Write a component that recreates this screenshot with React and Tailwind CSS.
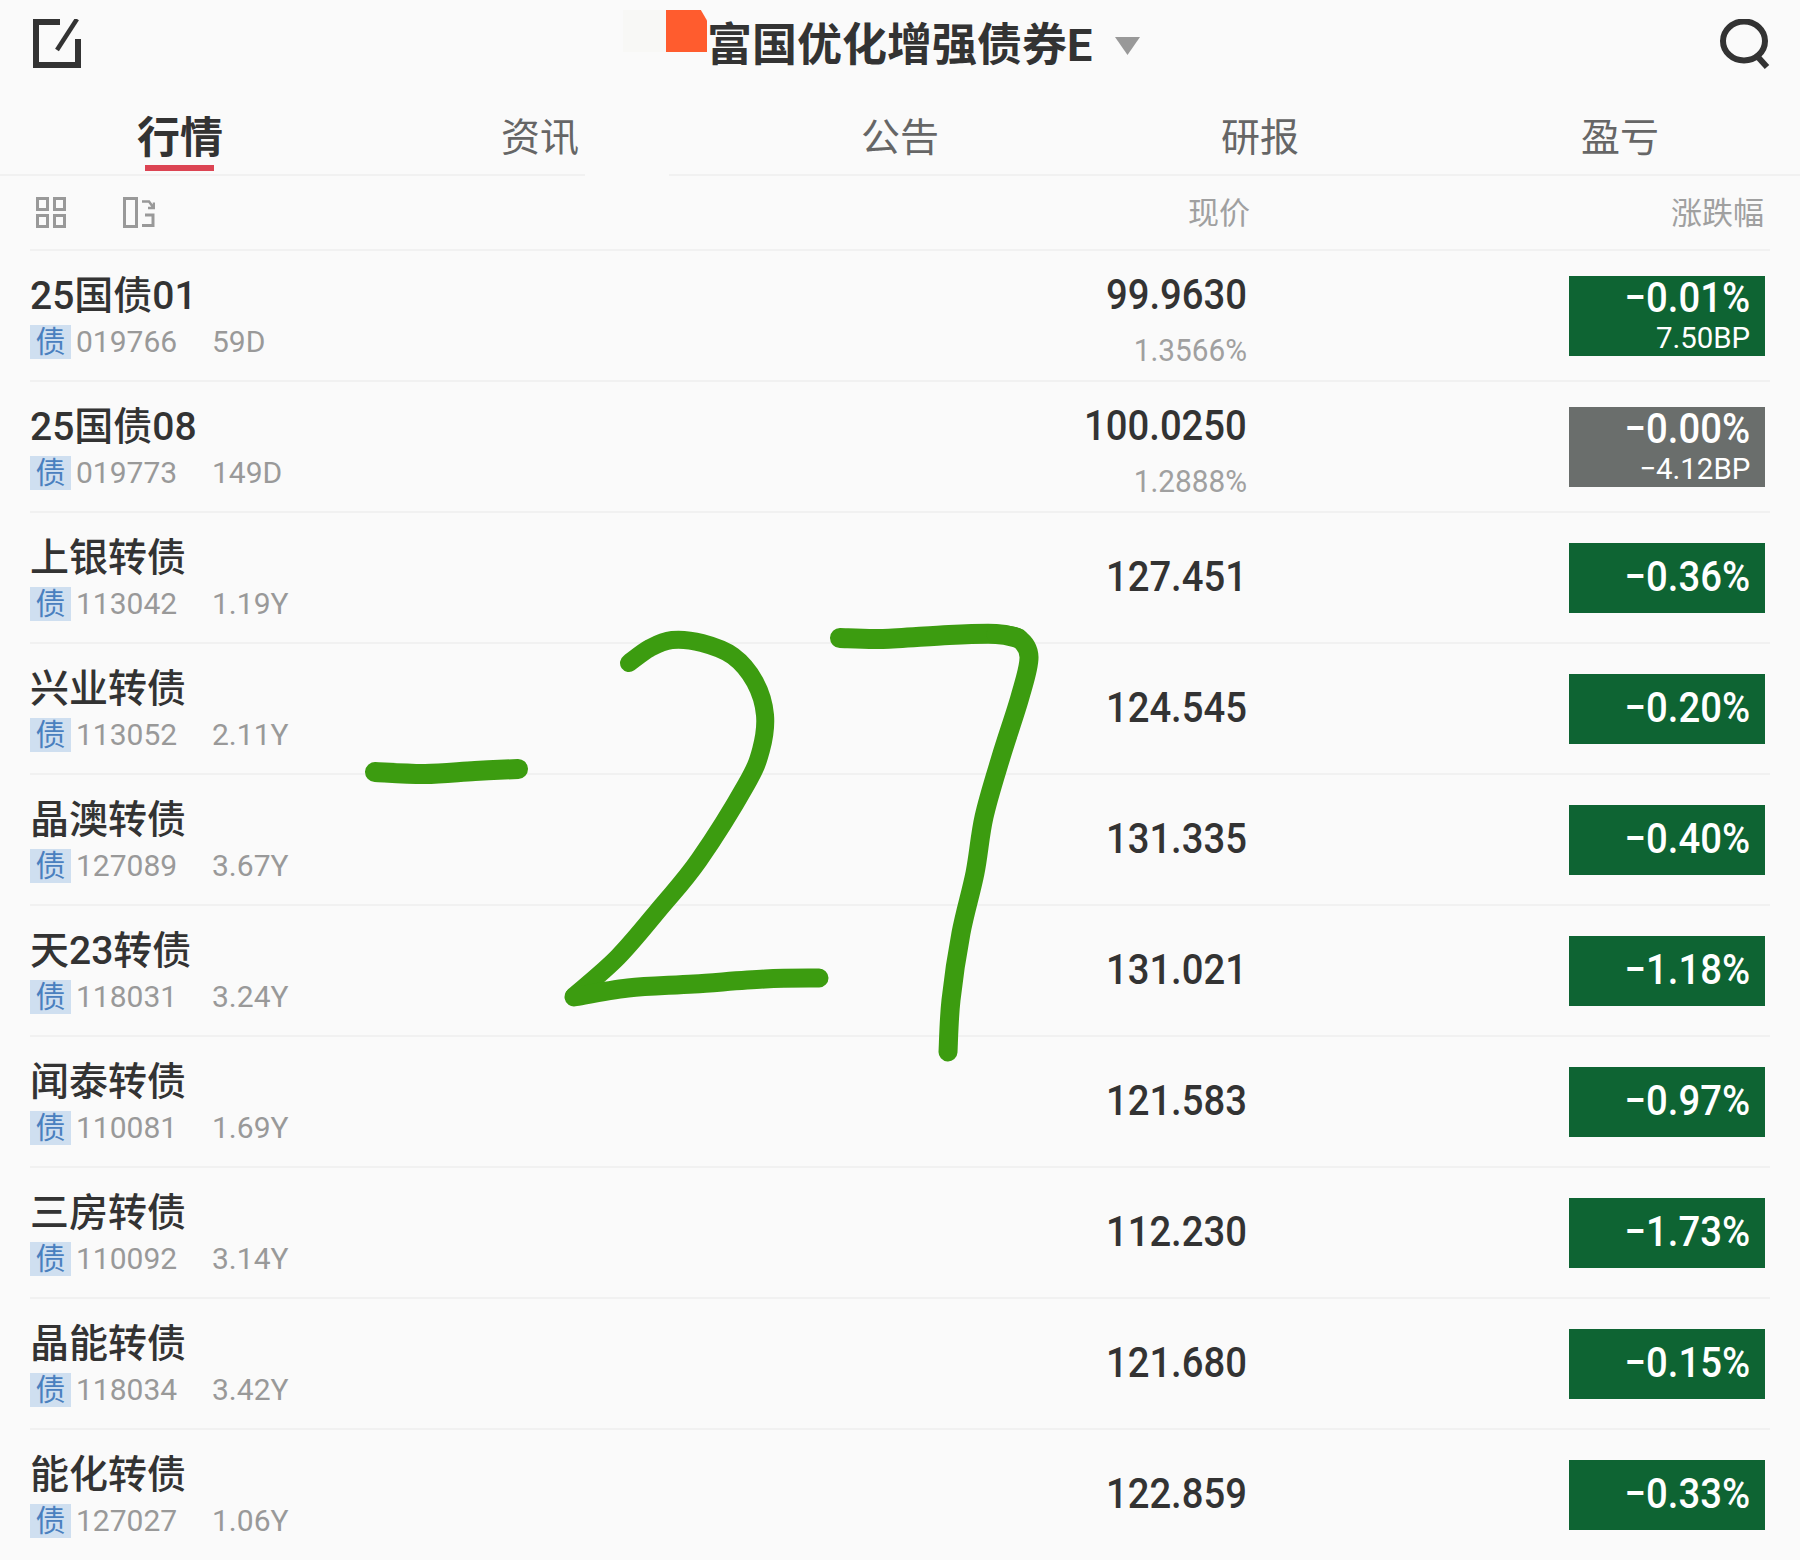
const rows = [
  { name: '25国债01', code: '019766', term: '59D', price: '99.9630', sub: '1.3566%', pct: '−0.01%', bp: '7.50BP' },
  { name: '25国债08', code: '019773', term: '149D', price: '100.0250', sub: '1.2888%', pct: '−0.00%', bp: '−4.12BP', flat: true },
  { name: '上银转债', code: '113042', term: '1.19Y', price: '127.451', pct: '−0.36%' },
  { name: '兴业转债', code: '113052', term: '2.11Y', price: '124.545', pct: '−0.20%' },
  { name: '晶澳转债', code: '127089', term: '3.67Y', price: '131.335', pct: '−0.40%' },
  { name: '天23转债', code: '118031', term: '3.24Y', price: '131.021', pct: '−1.18%' },
  { name: '闻泰转债', code: '110081', term: '1.69Y', price: '121.583', pct: '−0.97%' },
  { name: '三房转债', code: '110092', term: '3.14Y', price: '112.230', pct: '−1.73%' },
  { name: '晶能转债', code: '118034', term: '3.42Y', price: '121.680', pct: '−0.15%' },
  { name: '能化转债', code: '127027', term: '1.06Y', price: '122.859', pct: '−0.33%' },
];

const tabs = ['行情', '资讯', '公告', '研报', '盈亏'];

// hand-drawn strokes over the list, points in page pixels
const smooth = (pts) => {
  let d = `M${pts[0][0]} ${pts[0][1]}`;
  for (let i = 0; i < pts.length - 1; i++) {
    const p0 = pts[i - 1] || pts[i];
    const p1 = pts[i];
    const p2 = pts[i + 1];
    const p3 = pts[i + 2] || p2;
    d += ` C${p1[0] + (p2[0] - p0[0]) / 6} ${p1[1] + (p2[1] - p0[1]) / 6} ${p2[0] - (p3[0] - p1[0]) / 6} ${p2[1] - (p3[1] - p1[1]) / 6} ${p2[0]} ${p2[1]}`;
  }
  return d;
};

const strokes = [
  { w: 20, pts: [[375, 772], [425, 774], [475, 771], [518, 769]] },
  { w: 18, pts: [[629, 663], [650, 648], [672, 640], [702, 643], [733, 656], [755, 682], [765, 715], [761, 750], [746, 785], [699, 860], [661, 907], [618, 957], [574, 996]] },
  { w: 19, pts: [[574, 997], [628, 988], [694, 984], [765, 979], [819, 978]] },
  { w: 20, pts: [[840, 638], [883, 639], [949, 635], [996, 634], [1018, 638]] },
  { w: 19, pts: [[996, 634], [1018, 638], [1029, 657], [1020, 697], [1001, 757], [984, 817], [975, 873], [961, 933], [951, 1000], [948, 1052]] },
];

const Row = ({ r }) => (
  <div className="mx-[30px] flex h-[131px] items-center border-t-2 border-[#f1f1f1] text-[#333]">
    <div className="flex-1 pt-[1px]">
      <div className="text-[39px] leading-[44px] font-medium">{r.name}</div>
      <div className="mt-[7px] flex h-[34px] items-center text-[30px] text-[#999]">
        <span className="flex h-[34px] w-[41px] items-center justify-center bg-[#cfdff0] text-[#4a80bf]">债</span>
        <span className="ml-[5px] w-[100px]">{r.code}</span>
        <span className="ml-[36px]">{r.term}</span>
      </div>
    </div>
    <div className={`flex w-[301px] flex-col items-end ${r.sub ? 'pt-[8px]' : 'pb-[2px]'}`}>
      <span className="inline-block origin-right scale-x-[0.91] text-[42px] leading-[50px] font-medium">{r.price}</span>
      {r.sub && <span className="mt-[13px] inline-block origin-right scale-x-[0.96] text-[31px] leading-[36px] text-[#a0a0a0]">{r.sub}</span>}
    </div>
    <div className={`ml-[322px] mr-[5px] flex w-[196px] flex-col items-end justify-center pr-[15px] text-white ${r.bp ? 'h-[80px] pb-[6px]' : 'h-[70px] pb-[4px]'} ${r.flat ? 'bg-[#6a6e6c]' : 'bg-[#0e6433]'}`}>
      <span className="inline-block origin-right scale-x-[0.89] text-[43px] leading-[46px] font-medium">{r.pct}</span>
      {r.bp && <span className="mt-[4px] inline-block origin-right scale-x-[0.98] text-[30px] leading-[28px]">{r.bp}</span>}
    </div>
  </div>
);

export default function App() {
  return (
    <div className="relative h-[1560px] w-[1800px] overflow-hidden bg-[#fafafa] font-[Roboto,'Noto_Sans_CJK_SC',sans-serif]">
      <header className="flex h-[84px] items-start">
        <svg className="ml-[33px] mt-[19px] h-[49px] w-[48px]" viewBox="0 0 48 49" fill="none" stroke="#333" strokeWidth="6">
          <path d="M27 3H3V46H45V20" />
          <path d="M44 0L24 31" strokeWidth="4.5" />
        </svg>
        <div className="ml-[542px] mt-[10px] h-[42px] w-[43px] bg-[#f8f8f6]" />
        <div className="mt-[10px] h-[42px] w-[41px] bg-[#ff5c2e] [clip-path:polygon(0_0,85%_0,100%_25%,100%_100%,0_100%)]" />
        <h1 className="mt-[16px] text-[45px] leading-[60px] font-bold whitespace-nowrap text-[#333]">富国优化增强债券E</h1>
        <svg className="ml-[23px] mt-[37px] h-[18px] w-[25px]" viewBox="0 0 25 18" fill="#999">
          <path d="M0 0H25L12.5 18Z" />
        </svg>
        <svg className="ml-auto mr-[30px] mt-[19px] h-[50px] w-[52px]" viewBox="0 0 52 50" fill="none" stroke="#333" strokeWidth="6">
          <ellipse cx="26" cy="22" rx="21" ry="19.5" />
          <path d="M39 37L49 48" />
        </svg>
      </header>

      <nav className="grid h-[90px] grid-cols-5 pb-[2px]">
        {tabs.map((t, i) => (
          <div key={t} className="relative flex items-center justify-center pt-[20px]">
            {i === 0 ? (
              <>
                <span className="text-[43px] font-bold text-[#333]">{t}</span>
                <span className="absolute bottom-[1px] left-[145px] h-[6px] w-[69px] bg-[#dc4453]" />
              </>
            ) : (
              <span className="text-[39px] text-[#666]">{t}</span>
            )}
          </div>
        ))}
      </nav>
      <div className="flex h-[2px]">
        <div className="w-[585px] bg-[#f1f1f1]" />
        <div className="ml-[84px] flex-1 bg-[#f1f1f1]" />
      </div>

      <div className="mx-[30px] flex h-[73px] items-center justify-between">
        <div className="flex items-center">
          <svg className="ml-[6px] h-[31px] w-[30px]" viewBox="0 0 30 31" fill="none" stroke="#999" strokeWidth="3">
            <rect x="1.5" y="1.5" width="10" height="11" />
            <rect x="18.5" y="1.5" width="10" height="11" />
            <rect x="1.5" y="18.5" width="10" height="11" />
            <rect x="18.5" y="18.5" width="10" height="11" />
          </svg>
          <svg className="ml-[57px] h-[31px] w-[32px]" viewBox="0 0 32 31" fill="none" stroke="#999" strokeWidth="3">
            <rect x="1.5" y="1.5" width="12" height="28" />
            <path d="M19 4.5H26L30 10M31 5.5V11H25" strokeWidth="2.5" />
            <path d="M22 18H30V28.5H19" />
          </svg>
        </div>
        <div className="mt-[4px] flex items-center text-[31px] text-[#a0a0a0]">
          <span>现价</span>
          <span className="ml-[421px] mr-[6px]">涨跌幅</span>
        </div>
      </div>

      {rows.map((r) => (
        <Row key={r.code} r={r} />
      ))}

      <svg className="pointer-events-none absolute inset-0 h-[1560px] w-[1800px]" viewBox="0 0 1800 1560" fill="none" stroke="#3c9c10" strokeLinecap="round" strokeLinejoin="round">
        {strokes.map((s, i) => (
          <path key={i} d={smooth(s.pts)} strokeWidth={s.w} />
        ))}
      </svg>
    </div>
  );
}
